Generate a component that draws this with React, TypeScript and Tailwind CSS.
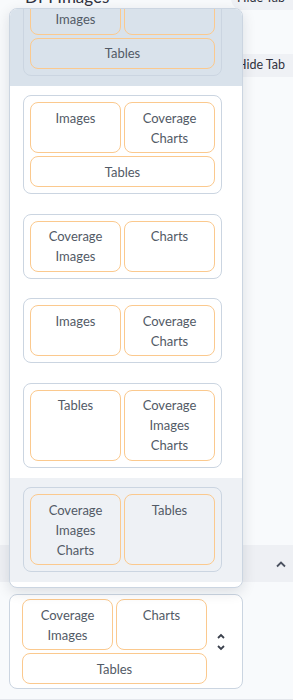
type Pill = { label: string; wide?: boolean };

const options: { pills: Pill[]; tone?: string }[] = [
  {
    pills: [{ label: "Coverage\nImages" }, { label: "Charts" }, { label: "Tables", wide: true }],
    tone: "bg-[#d9e2eb]",
  },
  { pills: [{ label: "Images" }, { label: "Coverage\nCharts" }, { label: "Tables", wide: true }] },
  { pills: [{ label: "Coverage\nImages" }, { label: "Charts" }] },
  { pills: [{ label: "Images" }, { label: "Coverage\nCharts" }] },
  { pills: [{ label: "Tables" }, { label: "Coverage\nImages\nCharts" }] },
  { pills: [{ label: "Coverage\nImages\nCharts" }, { label: "Tables" }], tone: "bg-[#eef1f5]" },
];

function Pills({ pills }: { pills: Pill[] }) {
  return (
    <div className="grid grid-cols-2 gap-[3px]">
      {pills.map((p, i) => (
        <div
          key={i}
          className={
            "whitespace-pre-line rounded-lg border border-[#fbc98e] py-[4.5px] text-center text-[13px] leading-5 text-[#525a66] " +
            (p.wide ? "col-span-2" : "")
          }
        >
          {p.label}
        </div>
      ))}
    </div>
  );
}

function HideTab() {
  return (
    <div className="ml-auto flex h-[23px] w-[62px] items-center rounded-l-full bg-[#eff1f5] pl-[6px] text-[12.5px] text-[#31333f]">
      Hide Tab
    </div>
  );
}

export default function App() {
  return (
    <div className="relative h-[700px] w-[293px] overflow-hidden bg-[#f8fafc] font-['Lato',sans-serif]">
      {/* page behind the open menu */}
      <div className="-mt-[13px] flex items-start">
        <div className="ml-[25px] text-[17px] leading-[20px] text-[#31333f]">DPI Images</div>
        <HideTab />
      </div>
      <div className="mt-[44px] flex">
        <HideTab />
      </div>
      <div className="mt-[468px] flex h-[37px] items-center justify-end bg-[#eef0f4] pr-[6px]">
        <svg width="12" height="8" viewBox="0 0 12 8" fill="none" stroke="#4b5260" strokeWidth="1.8">
          <polyline points="2,6.5 6,2.5 10,6.5" />
        </svg>
      </div>

      {/* the select itself */}
      <div className="ml-[9px] mt-[12px] flex w-[234px] items-center rounded-lg border border-[#cbd5e1] bg-white py-[4px] pl-[12px]">
        <div className="w-[185px]">
          <Pills
            pills={[{ label: "Coverage\nImages" }, { label: "Charts" }, { label: "Tables", wide: true }]}
          />
        </div>
        <svg className="ml-[9px]" width="10" height="18" viewBox="0 0 10 18" fill="none" stroke="#3a404c" strokeWidth="1.8">
          <polyline points="2,5 5,2 8,5" />
          <polyline points="2,13 5,16 8,13" />
        </svg>
      </div>
      <div className="mt-[10px] h-[2px] bg-[#e4e7ec]" />

      {/* open listbox */}
      <div className="absolute left-[9px] top-[8px] h-[580px] w-[234px] overflow-hidden rounded-lg border border-[#cbd5e1] bg-white pb-[5px] shadow-[0_4px_14px_rgba(15,23,42,0.12)]">
        <div className="-mt-[42px]">
          {options.map((o, i) => (
            <div key={i} className={"py-[9.75px] pl-[13px] " + (o.tone ?? "")}>
              <div className="w-[199px] rounded-lg border border-[#cbd5e1] p-[6px]">
                <Pills pills={o.pills} />
              </div>
            </div>
          ))}
        </div>
      </div>
    </div>
  );
}
